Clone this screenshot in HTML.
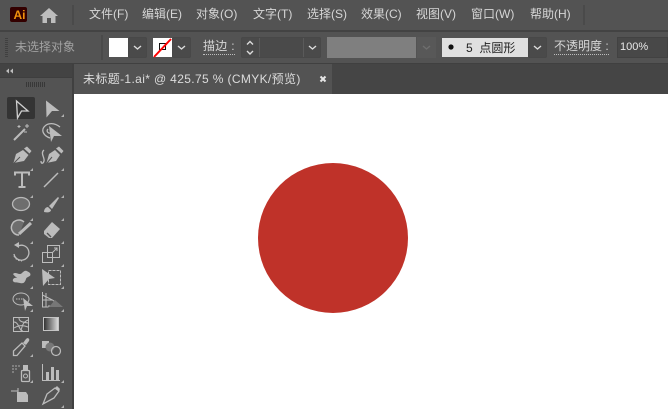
<!DOCTYPE html>
<html><head><meta charset="utf-8"><style>
html,body{margin:0;padding:0;background:#535353;}
body{width:668px;height:409px;overflow:hidden;position:relative;font-family:"Liberation Sans","Noto Sans CJK SC",sans-serif;}
.a{position:absolute;}
.t{position:absolute;white-space:nowrap;font-size:12px;line-height:16px;color:#d6d6d6;}
.u{border-bottom:1px dotted #bdbdbd;line-height:15px;}
.c{position:absolute;box-sizing:border-box;background:#4a4a4a;border:1px solid #484848;border-radius:2px;}
svg{position:absolute;left:0;top:0;}
</style></head><body>
<div class="a" style="left:0;top:30px;width:668px;height:2px;background:#434343"></div>
<div class="a" style="left:0;top:63px;width:668px;height:2px;background:#404040"></div>
<div class="a" style="left:74px;top:64px;width:594px;height:30px;background:#454545"></div>
<div class="a" style="left:74px;top:64px;width:258px;height:30px;background:#535353"></div>
<div class="a" style="left:0;top:64px;width:72px;height:13px;background:#434343"></div>
<div class="a" style="left:0;top:77px;width:72px;height:1px;background:#3e3e3e"></div>
<div class="a" style="left:72px;top:64px;width:2px;height:345px;background:#404040"></div>
<div class="a" style="left:74px;top:94px;width:594px;height:315px;background:#fff"></div>

<span class="t" style="left:89px;top:6px">文件(F)</span>
<span class="t" style="left:142px;top:6px">编辑(E)</span>
<span class="t" style="left:196px;top:6px">对象(O)</span>
<span class="t" style="left:253px;top:6px">文字(T)</span>
<span class="t" style="left:307px;top:6px">选择(S)</span>
<span class="t" style="left:361px;top:6px">效果(C)</span>
<span class="t" style="left:416px;top:6px">视图(V)</span>
<span class="t" style="left:471px;top:6px">窗口(W)</span>
<span class="t" style="left:530px;top:6px">帮助(H)</span>

<span class="t" style="left:15px;top:39px;color:#a2a2a2">未选择对象</span>
<span class="t u" style="left:203px;top:39px;letter-spacing:.3px">描边 :</span>
<span class="t u" style="left:554px;top:39px">不透明度 :</span>

<div class="c" style="left:128px;top:37px;width:19px;height:21px"></div>
<div class="a" style="left:109px;top:38px;width:19px;height:19px;background:#fff"></div>
<div class="c" style="left:172px;top:37px;width:19px;height:21px"></div>
<div class="a" style="left:153px;top:38px;width:19px;height:19px;background:#fff"></div>
<div class="c" style="left:241px;top:37px;width:80px;height:21px"></div>
<div class="a" style="left:259px;top:38px;width:1px;height:19px;background:#5a5a5a"></div>
<div class="a" style="left:303px;top:38px;width:1px;height:19px;background:#5a5a5a"></div>
<div class="a" style="left:327px;top:37px;width:89px;height:21px;background:#7f7f7f"></div>
<div class="a" style="left:417px;top:37px;width:19px;height:21px;background:#585858"></div>
<div class="c" style="left:528px;top:37px;width:19px;height:21px"></div>
<div class="a" style="left:442px;top:38px;width:86px;height:19px;background:#e0e0e0"></div>
<div class="a" style="left:617px;top:37px;width:51px;height:21px;background:#484848;box-sizing:border-box;border:1px solid #424242"></div>
<span class="t" style="left:466px;top:40px;color:#222">5&nbsp; 点圆形</span>
<span class="t" style="left:620px;top:39px;font-size:11px;color:#e8e8e8">100%</span>

<span class="t" style="left:83px;top:71px;color:#dcdcdc;letter-spacing:.36px;">未标题-1.ai* @ 425.75 % (CMYK/预览)</span>
<div class="a" style="left:258px;top:163px;width:150px;height:150px;border-radius:50%;background:#bf3229"></div>
<div class="a" style="left:7px;top:97px;width:28px;height:22px;background:#343434;border-radius:2px"></div>

<svg width="668" height="409" viewBox="0 0 668 409" fill="none">
<rect x="10" y="7" width="17" height="15" rx="2" fill="#330000"/>
<text x="13.500" y="19" font-family="Liberation Sans" font-weight="bold" font-size="12" fill="#f2920c">Ai</text>
<path d="M40 16 L49 8 L58 16 L55.500 16 L55.500 23 L51 23 L51 18 L47 18 L47 23 L42.500 23 L42.500 16Z" fill="#bdbdbd"/>
<rect x="72" y="5" width="2" height="20" fill="#4a4a4a"/>
<rect x="583" y="5" width="2" height="20" fill="#4a4a4a"/>
<path d="M5 38.500h3M5 40.500h3M5 42.500h3M5 44.500h3M5 46.500h3M5 48.500h3M5 50.500h3M5 52.500h3M5 54.500h3M5 56.500h3" stroke="#404040"/>
<rect x="101" y="35" width="2" height="25" fill="#4a4a4a"/>
<g stroke="#dcdcdc" stroke-width="1.400">
<path d="M134 46l3.500 3 3.500-3M178 46l3.500 3 3.500-3M309 46l3.500 3 3.500-3M534 46l3.500 3 3.500-3"/>
<path d="M247 44.500l3-3 3 3M247 51l3 3 3-3"/>
</g>
<path d="M423 46l3.500 3 3.500-3" stroke="#6e6e6e" stroke-width="1.400"/>
<rect x="159.500" y="43.500" width="6" height="6" stroke="#111"/>
<path d="M154 57L171 39" stroke="#f00" stroke-width="2"/>
<circle cx="451" cy="47" r="2.600" fill="#111"/>
<path d="M320.500 76.500l5 5M325.500 76.500l-5 5" stroke="#e6e6e6" stroke-width="2"/>
<path d="M9 68.500l-3 2.500 3 2.500zM13 68.500l-3 2.500 3 2.500z" fill="#bdbdbd"/>
<path d="M26.500 82v5M28.500 82v5M30.500 82v5M32.500 82v5M34.500 82v5M36.500 82v5M38.500 82v5M40.500 82v5M42.500 82v5M44.500 82v5" stroke="#383838"/>

<g stroke="#bcbcbc" stroke-width="1.300">
<path d="M16.500 101L28 111L21.500 111L17.500 118Z" stroke="#cfcfcf"/>
<path d="M46 100.500L59.500 111L52 111L46.500 117.500Z" fill="#bcbcbc" stroke="none"/>
<!-- magic wand -->
<path d="M14 140L25 129" stroke-width="2"/>
<path d="M19 125v3M17.500 126.500h3M27 124v4M25 126h4M24 132h3" stroke-width="1"/>
<!-- lasso -->
<path d="M50 138C44 136 41 131 44 127C48 122 55 123 60 127M48 129c-2 2 0 5 3 4"/>
<path d="M49 126L62 136L54 136L51 142Z" fill="#bcbcbc" stroke="none"/>
<!-- pen -->
<path d="M13.500 163L16 154L23 150L28.500 155L24 161Z" fill="#bcbcbc" stroke="none"/>
<path d="M24 148.500l3-2 4.500 4.500-2 2.500z" fill="#bcbcbc" stroke="none"/>
<path d="M14 163L20 157" stroke="#535353" stroke-width="1"/>
<!-- curvature pen -->
<path d="M46.500 163L49 154L55 150L60 155L56 161Z" fill="#bcbcbc" stroke="none"/>
<path d="M56 148.500l3-2 4.500 4.500-2 2.500z" fill="#bcbcbc" stroke="none"/>
<path d="M47 163L52 157" stroke="#535353" stroke-width="1"/>
<path d="M44 150c-4 3 1 8 0 11c-1 3-3 3-3 0"/>
<!-- type -->
<path d="M15 175.500v-3h14v3M22 172.500V187M18.500 187h7" stroke-width="2"/>
<path d="M44 187L58 173" stroke-width="1.500"/>
<!-- ellipse -->
<ellipse cx="21" cy="204" rx="8.500" ry="6.500" fill="#6e6e6e" stroke="#b8b8b8"/>
<!-- brush -->
<path d="M44 212c0-3 2-5 4-5l3 3c0 2-3 3-7 2z" fill="#bcbcbc" stroke="none"/>
<path d="M49 206L58 197L59 198L52 209Z" fill="#bcbcbc" stroke="none"/>
<!-- shaper -->
<path d="M24 222a7.500 7.500 0 1 0-5 13" stroke-width="1.500" fill="#6e6e6e"/>
<path d="M19 234L31 223" stroke-width="3"/>
<!-- eraser -->
<path d="M44 231l8-9 8 7-8 9h-3l-5-4z" fill="#bcbcbc" stroke="none"/>
<path d="M47 233l4 4" stroke="#535353"/>
<!-- rotate -->
<path d="M18 246a7.500 7.500 0 1 1-4 8" stroke-width="1.300"/>
<path d="M19 242v6l-5-3z" fill="#bcbcbc" stroke="none"/>
<path d="M14 256a8 8 0 0 0 8 5" stroke-dasharray="1.500 1.500" stroke-width="1"/>
<!-- scale -->
<rect x="42.500" y="252.500" width="10" height="10" stroke-width="1"/>
<rect x="47.500" y="245.500" width="12" height="12" stroke-width="1"/>
<path d="M52 253l5-5M54 248h3v3" stroke-width="1"/>
<!-- warp -->
<path d="M13 274c3-3 6 2 9-1s4-3 8 0c2 4-3 3-4 6s-2 5-6 4-6 0-7-2 2-4 4-3-3-2-4-4z" fill="#bcbcbc" stroke="none"/>
<!-- free transform -->
<path d="M42 269L55 278L49 279L43 286Z" fill="#bcbcbc" stroke="none"/>
<rect x="48.500" y="270.500" width="12" height="14" stroke-width="1" stroke-dasharray="3 1"/>
<!-- shape builder -->
<ellipse cx="21" cy="299" rx="8" ry="6" stroke-width="1"/>
<path d="M16 299h8" stroke-dasharray="1.500 1" stroke-width="1"/>
<path d="M23 298L33 306L27 306L25 311Z" fill="#bcbcbc" stroke="none"/>
<!-- perspective -->
<path d="M42.500 292v15h6M42.500 295l10 5 8 6H48M46 293v14M42.500 300h10" stroke-width="1"/>
<path d="M49 307l6-7 8 7z" fill="#777" stroke="none"/>
<!-- mesh -->
<rect x="13.500" y="317.500" width="15" height="14" stroke-width="1"/>
<path d="M14 322c5 0 5 9 9 9M28 320c-5 2-6 6-7 11M14 328c5-3 9-3 14-1M19 318c0 3 2 4 9 5" stroke-width="1"/>
</g>
<defs><linearGradient id="g"><stop offset="0" stop-color="#2e2e2e"/><stop offset="1" stop-color="#e0e0e0"/></linearGradient></defs>
<rect x="43.500" y="317.500" width="15" height="13" fill="url(#g)" stroke="#c4c4c4"/>
<g stroke="#bcbcbc" stroke-width="1.300">
<!-- eyedropper -->
<path d="M13.500 355.500L13.500 351L22 343L25 346L17 355.500Z"/>
<path d="M23 343l3-4c2-2 4 0 3 2l-3 4z" fill="#bcbcbc" stroke="none"/>
<!-- blend -->
<rect x="42" y="341" width="7" height="7" fill="#bcbcbc" stroke="none"/>
<circle cx="50" cy="347" r="4.500" fill="#777" stroke="none"/>
<circle cx="56" cy="351" r="4.500" stroke-width="1.200"/>
<!-- symbol sprayer -->
<path d="M12 366h2M15 366h2M18 366h2M12 369h2M15 369h2M12 372h2" stroke-width="1.500" stroke="#8e8e8e"/>
<rect x="21.500" y="370.500" width="8" height="11" stroke-width="1.300" rx="1"/>
<circle cx="25.500" cy="376" r="2" stroke-width="1"/>
<rect x="23" y="365" width="5" height="5" fill="#bcbcbc" stroke="none"/>
<!-- graph -->
<path d="M42.500 364v16.500H60" stroke-width="1"/>
<rect x="46" y="372" width="3" height="8" fill="#bcbcbc" stroke="none"/>
<rect x="51" y="367" width="3" height="13" fill="#bcbcbc" stroke="none"/>
<rect x="56" y="370" width="3" height="10" fill="#bcbcbc" stroke="none"/>
<!-- artboard -->
<path d="M11 391h7M18 388v6" stroke-width="1"/>
<path d="M17 392h9l2 3v7H17z" fill="#bcbcbc" stroke="none"/>
<!-- slice -->
<path d="M43 404L47 394L55 388L59 391L54 398Z"/>
<path d="M55 388l2-2 3 3-1 2z" fill="#bcbcbc" stroke="none"/>
</g>
<path d="M64 114v3h-3zM33 168v3h-3zM64 168v3h-3zM33 195v3h-3zM64 195v3h-3zM33 218v3h-3zM64 218v3h-3zM33 241v3h-3zM64 241v3h-3zM33 264v3h-3zM64 264v3h-3zM33 286v3h-3zM64 286v3h-3zM33 309v3h-3zM64 309v3h-3zM33 354v3h-3zM33 380v3h-3zM64 380v3h-3zM64 405v3h-3z" fill="#b0b0b0"/>
</svg>
</body></html>
